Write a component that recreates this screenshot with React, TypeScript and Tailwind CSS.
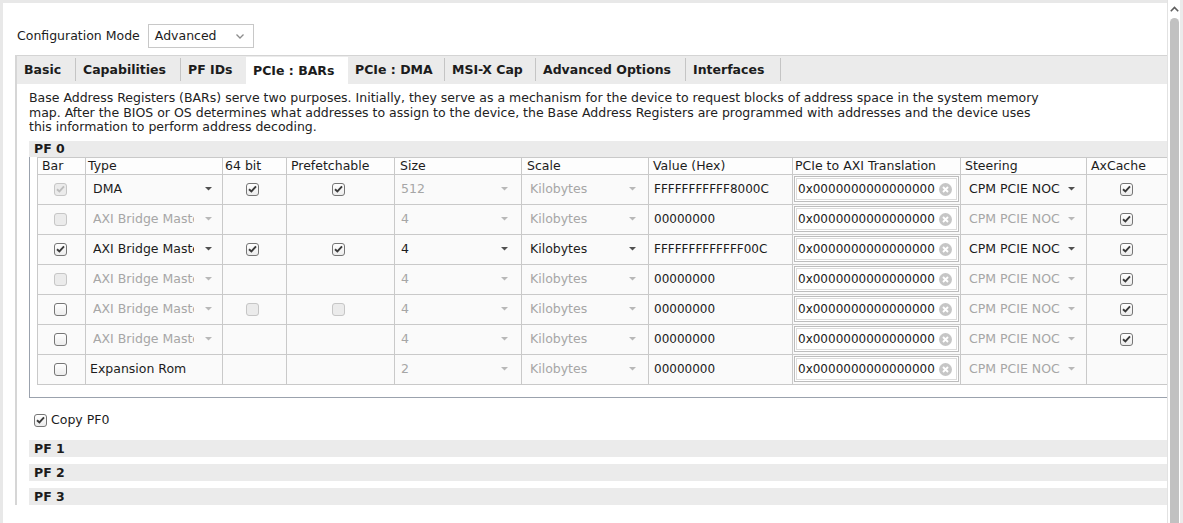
import React from "react";

type Box = "on" | "off" | "dis-on" | "dis-off" | null;

type Row = {
  bar: Box;
  type: string;
  typeOn: boolean | null;
  b64: Box;
  pre: Box;
  size: string;
  sizeOn: boolean;
  scaleOn: boolean;
  value: string;
  steerOn: boolean;
  ax: Box;
};

const rows: Row[] = [
  { bar: "dis-on", type: "DMA", typeOn: true, b64: "on", pre: "on", size: "512", sizeOn: false, scaleOn: false, value: "FFFFFFFFFFF8000C", steerOn: true, ax: "on" },
  { bar: "dis-off", type: "AXI Bridge Master", typeOn: false, b64: null, pre: null, size: "4", sizeOn: false, scaleOn: false, value: "00000000", steerOn: false, ax: "on" },
  { bar: "on", type: "AXI Bridge Master", typeOn: true, b64: "on", pre: "on", size: "4", sizeOn: true, scaleOn: true, value: "FFFFFFFFFFFFF00C", steerOn: true, ax: "on" },
  { bar: "dis-off", type: "AXI Bridge Master", typeOn: false, b64: null, pre: null, size: "4", sizeOn: false, scaleOn: false, value: "00000000", steerOn: false, ax: "on" },
  { bar: "off", type: "AXI Bridge Master", typeOn: false, b64: "dis-off", pre: "dis-off", size: "4", sizeOn: false, scaleOn: false, value: "00000000", steerOn: false, ax: "on" },
  { bar: "off", type: "AXI Bridge Master", typeOn: false, b64: null, pre: null, size: "4", sizeOn: false, scaleOn: false, value: "00000000", steerOn: false, ax: "on" },
  { bar: "off", type: "Expansion Rom", typeOn: null, b64: null, pre: null, size: "2", sizeOn: false, scaleOn: false, value: "00000000", steerOn: false, ax: null },
];

const tabs = [
  { label: "Basic", w: "w-[59px]", sep: true },
  { label: "Capabilities", w: "w-[105px]", sep: true },
  { label: "PF IDs", w: "w-[65px]", sep: false },
  { label: "PCIe : BARs", w: "w-[102px]", sep: false, active: true },
  { label: "PCIe : DMA", w: "w-[97px]", sep: true },
  { label: "MSI-X Cap", w: "w-[91px]", sep: true },
  { label: "Advanced Options", w: "w-[150px]", sep: true },
  { label: "Interfaces", w: "w-[95px]", sep: true },
];

function Check({ state }: { state: Box }) {
  if (!state) return null;
  const dis = state.startsWith("dis");
  const on = state.endsWith("on");
  return (
    <span
      className={
        dis
          ? "flex h-[13px] w-[13px] items-center justify-center rounded-[3px] border border-[#c6c6c6] bg-[#ebebeb]"
          : "flex h-[13px] w-[13px] items-center justify-center rounded-[3px] border border-[#767676] bg-gradient-to-b from-white to-[#ececec]"
      }
    >
      {on && (
        <svg width="9" height="8" viewBox="0 0 9 8">
          <path
            d="M1 4.2 L3.4 6.4 L8 1.4"
            fill="none"
            stroke={dis ? "#bdbdbd" : "#3a3a3a"}
            strokeWidth="1.9"
          />
        </svg>
      )}
    </span>
  );
}

function Arrow({ on }: { on: boolean }) {
  return (
    <svg width="7" height="4" viewBox="0 0 7 4" className="shrink-0">
      <path d="M0 0 H7 L3.5 3.5 Z" fill={on ? "#505050" : "#b8b8b8"} />
    </svg>
  );
}

function Drop({ text, on, pl, pr, textW }: { text: string; on: boolean; pl: string; pr: string; textW: string }) {
  return (
    <div className={`flex h-full items-center justify-between ${pl} ${pr}`}>
      <span className={`${textW} overflow-hidden whitespace-nowrap ${on ? "text-[#1c1c1c]" : "text-[#a6a6a6]"}`}>
        {text}
      </span>
      <Arrow on={on} />
    </div>
  );
}

function CheckCell({ state }: { state: Box }) {
  return (
    <div className="flex h-full items-center justify-center pr-[5px]">
      <Check state={state} />
    </div>
  );
}

export default function App() {
  const td = "h-[30px] border border-[#c9c9c9] bg-[#fafafa] p-0 align-middle";
  const th = "h-[17px] border border-[#c9c9c9] bg-[#fdfdfd] p-0 text-left font-normal leading-[16px] whitespace-nowrap";
  return (
    <div className="flex h-[523px] w-[1183px] overflow-hidden bg-white font-['DejaVu_Sans',sans-serif] text-[12.5px] text-[#1c1c1c]">
      {/* main viewport */}
      <div className="h-full w-[1167px] shrink-0 overflow-hidden border-l-[3px] border-t-[3px] border-[#e8e8e8]">
        <div className="mt-[21px] flex h-[24px] items-center pl-[14px]">
          <span>Configuration Mode</span>
          <div className="ml-[8px] flex h-[24px] w-[106px] items-center border border-[#c8c8c8] pl-[6px] pr-[9px]">
            <span>Advanced</span>
            <svg width="8" height="5" viewBox="0 0 8 5" className="ml-auto">
              <path d="M0.5 0.5 L4 4 L7.5 0.5" fill="none" stroke="#8c8c8c" strokeWidth="1.3" />
            </svg>
          </div>
        </div>

        <div className="ml-[12px] mt-[7px] w-[1200px] border-l-2 border-[#d6d6d6]">
          {/* tab bar */}
          <div className="flex h-[29px] items-end border-t border-[#d4d4d4] bg-[#ebebeb]">
            {tabs.map((t) => (
              <div
                key={t.label}
                className={`${t.w} flex items-center justify-between font-bold ${
                  t.active ? "h-[27px] bg-white" : "h-[28px]"
                }`}
              >
                <span className="pl-[7px] pt-[1px] whitespace-nowrap">{t.label}</span>
                {t.sep && <span className="mb-[2px] h-[23px] w-px bg-[#c4c4c4]" />}
              </div>
            ))}
          </div>

          {/* content */}
          <div className="pl-[12px] pt-[7px]">
            <p className="whitespace-nowrap leading-[14.5px] text-[#222]">
              Base Address Registers (BARs) serve two purposes. Initially, they serve as a mechanism for the device to request blocks of address space in the system memory
              <br />
              map. After the BIOS or OS determines what addresses to assign to the device, the Base Address Registers are programmed with addresses and the device uses
              <br />
              this information to perform address decoding.
            </p>

            <div className="mt-[6px] h-[16px] w-[1140px] bg-[#ebebeb] pl-[5px] font-bold leading-[16px]">PF 0</div>
            <div className="w-[1140px] border-b border-l border-[#9ba2ad] pb-[12px] pl-[7px]">
              <table className="w-[1134px] table-fixed border-collapse">
                <colgroup>
                  <col className="w-[48px]" />
                  <col className="w-[137px]" />
                  <col className="w-[64px]" />
                  <col className="w-[108px]" />
                  <col className="w-[127px]" />
                  <col className="w-[127px]" />
                  <col className="w-[144px]" />
                  <col className="w-[168px]" />
                  <col className="w-[126px]" />
                  <col className="w-[85px]" />
                </colgroup>
                <thead>
                  <tr>
                    <th className={`${th} pl-[4px]`}>Bar</th>
                    <th className={`${th} pl-[2px]`}>Type</th>
                    <th className={`${th} pl-[2px]`}>64 bit</th>
                    <th className={`${th} pl-[4px]`}>Prefetchable</th>
                    <th className={`${th} pl-[5px]`}>Size</th>
                    <th className={`${th} pl-[5px]`}>Scale</th>
                    <th className={`${th} pl-[4px]`}>Value (Hex)</th>
                    <th className={`${th} pl-[2px]`}>PCIe to AXI Translation</th>
                    <th className={`${th} pl-[4px]`}>Steering</th>
                    <th className={`${th} pl-[4px]`}>AxCache</th>
                  </tr>
                </thead>
                <tbody>
                  {rows.map((r, i) => (
                    <tr key={i}>
                      <td className={td}>
                        <div className="flex h-full items-center justify-center pr-[3px]">
                          <Check state={r.bar} />
                        </div>
                      </td>
                      <td className={td}>
                        {r.typeOn === null ? (
                          <span className="pl-[4px]">{r.type}</span>
                        ) : (
                          <Drop text={r.type} on={r.typeOn} pl="pl-[7px]" pr="pr-[10px]" textW="w-[101px]" />
                        )}
                      </td>
                      <td className={td}>
                        <CheckCell state={r.b64} />
                      </td>
                      <td className={td}>
                        <CheckCell state={r.pre} />
                      </td>
                      <td className={td}>
                        <Drop text={r.size} on={r.sizeOn} pl="pl-[6px]" pr="pr-[13px]" textW="w-[60px]" />
                      </td>
                      <td className={td}>
                        <Drop text="Kilobytes" on={r.scaleOn} pl="pl-[8px]" pr="pr-[12px]" textW="w-[80px]" />
                      </td>
                      <td className={`${td} pl-[5px] text-[12px]`}>{r.value}</td>
                      <td className={`${td} px-[1px]`}>
                        <div className="flex h-[26px] items-center justify-between border border-[#bdbdbd] bg-white pl-[3px] pr-[6px] shadow-[inset_0_0_0_1px_#fff,inset_0_0_0_2px_#dcdcdc]">
                          <span className="whitespace-nowrap text-[12px]">0x0000000000000000</span>
                          <svg width="13" height="13" viewBox="0 0 13 13" className="shrink-0">
                            <circle cx="6.5" cy="6.5" r="6.5" fill="#c6c6c6" />
                            <path d="M4 4 L9 9 M9 4 L4 9" stroke="#fff" strokeWidth="1.9" />
                          </svg>
                        </div>
                      </td>
                      <td className={td}>
                        <Drop text="CPM PCIE NOC" on={r.steerOn} pl="pl-[8px]" pr="pr-[11px]" textW="w-[92px]" />
                      </td>
                      <td className={td}>
                        <CheckCell state={r.ax} />
                      </td>
                    </tr>
                  ))}
                </tbody>
              </table>
            </div>

            <div className="mt-[16px] flex h-[13px] items-center pl-[5px]">
              <Check state="on" />
              <span className="ml-[4px]">Copy PF0</span>
            </div>

            <div className="mt-[13px] h-[17px] w-[1140px] bg-[#ebebeb] pl-[5px] font-bold leading-[17px]">PF 1</div>
            <div className="mt-[7px] h-[17px] w-[1140px] bg-[#ebebeb] pl-[5px] font-bold leading-[17px]">PF 2</div>
            <div className="mt-[7px] h-[17px] w-[1140px] bg-[#ebebeb] pl-[5px] font-bold leading-[17px]">PF 3</div>
          </div>
        </div>
      </div>

      {/* scrollbar */}
      <div className="flex h-full w-[16px] shrink-0 flex-col border-l border-r-[3px] border-l-[#e2e2e2] border-r-[#ebebeb] bg-white pl-[2px]">
        <div className="flex h-[18px] w-[9px] items-start justify-center pt-[6px]">
          <svg width="9" height="6" viewBox="0 0 9 6">
            <path d="M0.8 5.2 L4.5 1.4 L8.2 5.2" fill="none" stroke="#5e5e5e" strokeWidth="1.6" />
          </svg>
        </div>
        <div className="w-[9px] flex-1 rounded-t-full bg-[#c1c1c1]" />
      </div>
    </div>
  );
}
